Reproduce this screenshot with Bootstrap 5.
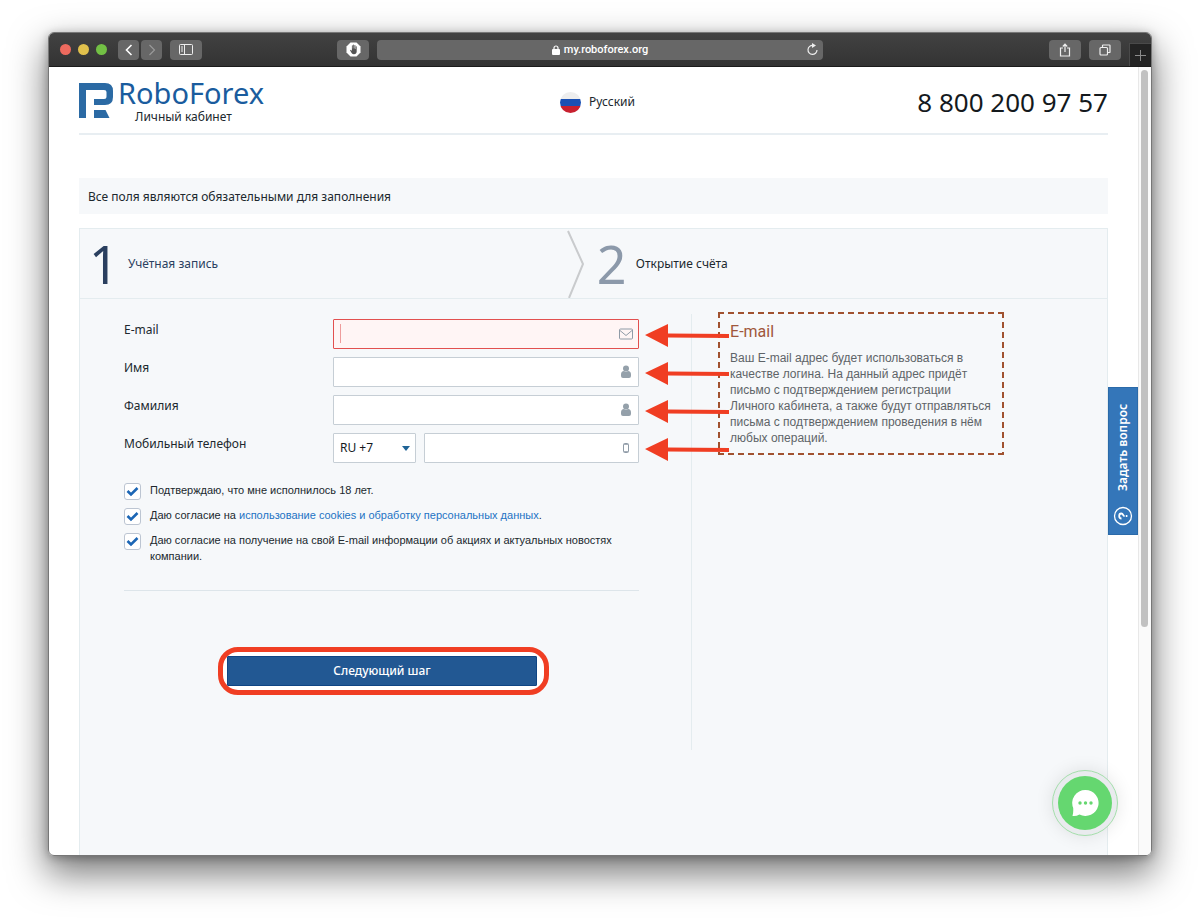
<!DOCTYPE html>
<html lang="ru">
<head>
<meta charset="utf-8">
<meta name="viewport" content="width=device-width, initial-scale=1">
<title>RoboForex — Личный кабинет</title>
<link href="https://cdn.jsdelivr.net/npm/bootstrap@5.3.0/dist/css/bootstrap.min.css" rel="stylesheet">
<style>
  :root { --line: #e4ecef; --panel: #f6f8fa; --accent: #f03e23; --brand: #225893; }
  body { font-family: "Noto Sans", sans-serif; font-size: 12px; line-height: 16px; color: #20282e; background: #fff; padding: 32px 48px 64px; }
  svg { display: block; }

  .browser { border: 1px solid #777; border-radius: 6px; overflow: hidden; background: #fff; }
  .browser-shadow { border-radius: 6px; box-shadow: 0 16px 36px 2px rgba(0,0,0,.52), 0 2px 10px rgba(0,0,0,.28); }

  .titlebar { height: 34px; background: linear-gradient(#424242, #333); border-bottom: 1px solid #1b1b1b; }
  .bar-side { flex: 1 1 0; }
  .lights { gap: 7px; padding: 0 11px; }
  .pair { gap: 2px; }
  .dot { width: 11px; height: 11px; border-radius: 50%; }
  .dot-close { background: #ed6a5e; }
  .dot-min { background: #e0c04c; }
  .dot-max { background: #72c044; }
  .tool { height: 20px; border: 0; border-radius: 4px; background: #676767; color: #fff; padding: 0; display: flex; align-items: center; justify-content: center; }
  .tool-w { width: 32px; }
  .tool-s { width: 21px; }
  .address { position: relative; flex: 0 0 446px; height: 20px; border-radius: 4px; background: #676767; color: #fff; font: 500 11px/20px Roboto, sans-serif; }
  .newtab { width: 22px; height: 23px; background: #232323; border: 1px solid #4a4a4a; border-width: 1px 0 0 1px; padding: 0; }

  .track { width: 13px; background: #fafafa; border-left: 1px solid #e8e8e8; padding: 3px 2px 0 2px; }
  .thumb { width: 7px; height: 71%; border-radius: 4px; background: #c1c1c1; }

  .page-body { padding: 0 30px; }
  .site-head { height: 68px; border-bottom: 2px solid #e8eef2; }
  .head-side { flex: 1 0 0; }
  .logo-name { font-size: 29px; line-height: 36px; color: #1a5c9e; }
  .logo-sub { line-height: 16px; padding-left: 17px; margin-top: -2px; }
  .hotline { font-size: 26px; line-height: 32px; color: #14191d; }
  .notice { background: var(--panel); height: 36px; padding: 2px 9px 0; margin-top: 43px; }

  .wizard { margin-top: 14px; background: var(--panel); border: 1px solid var(--line); border-bottom: 0; }
  .steps { height: 70px; border-bottom: 1px solid var(--line); }
  .step-one { flex: 0 0 47.4%; padding-left: 9px; color: #2a3f5f; }
  .step-two { padding-left: 12px; }
  .step-num { font-size: 52px; line-height: 60px; width: 39px; }
  .step-num-2 { color: #8c99aa; }

  .form-side { flex: 0 0 59.5%; padding: 20px 52px 0 44px; }
  .help-side { margin-top: 15px; height: 436px; border-left: 1px solid var(--line); padding-left: 26px; }
  .field { display: grid; grid-template-columns: 209px 1fr; position: relative; margin-bottom: 8px; }
  .field label { line-height: 22px; }
  .entry { position: relative; }
  .form-control, .form-select { height: 30px; border: 1px solid #c6ced5; border-radius: 1px; font-size: 12px; padding: 0 6px; box-shadow: none; background-color: #fff; }
  .form-control.wrong { border-color: #e2504f; background: #fff5f5; }
  .form-select { width: 83px; color: #14191d; background-size: 8px 5px; background-position: right 5px center;
    background-image: url("data:image/svg+xml,%3Csvg xmlns='http://www.w3.org/2000/svg' viewBox='0 0 8 5'%3E%3Cpath d='M0 0h8L4 5z' fill='%231f6396'/%3E%3C/svg%3E"); }
  .entry-icon { position: absolute; right: 6px; top: 8px; width: 14px; height: 14px; }
  .caret { position: absolute; left: 7px; top: 5px; width: 1px; height: 19px; background: #ee9c9c; }
  .arrow { position: absolute; left: calc(100% + 6px); top: 5px; z-index: 3; }

  .consents { padding-top: 11px; }
  .agree { margin-bottom: 7px; display: flex; }
  .agree label { font: 11px/16px "Liberation Sans", sans-serif; padding-left: 9px; }
  .agree a { color: #2373c4; text-decoration: none; }
  .form-check-input { width: 17px; height: 17px; margin: 1px 0 0; flex: none; border: 1px solid #bcc5d2; border-radius: 3px; background-color: #fff; }
  .form-check-input:checked { border-color: #bcc5d2; background-color: #fff; background-size: 15px 15px;
    background-image: url("data:image/svg+xml,%3Csvg xmlns='http://www.w3.org/2000/svg' viewBox='0 0 15 15'%3E%3Cpath d='M2.500 7l3.500 3.500L12.500 4' fill='none' stroke='%231c66b5' stroke-width='2.600'/%3E%3C/svg%3E"); }
  .rule { border-top: 1px solid #dde5ea; margin-top: 26px; }
  .ring-row { padding: 56px 0 0 4px; }
  .ring { width: 331px; max-width: 100%; height: 48px; margin: 0 auto; border: 5px solid var(--accent); border-radius: 20px; background: #fff; padding: 4px 7px 4px 4px; }
  .ring .btn { background: var(--brand); border: 1px solid #0f4584; border-radius: 1px; color: #fff; font-size: 12px; font-weight: 500; line-height: 16px; padding: 0; }

  .tip { width: 286px; height: 143px; margin-top: -2px; padding: 10px 12px 0; background: repeating-linear-gradient(90deg, #a0512f 0 6px, transparent 6px 10px) 0 0/100% 2px no-repeat, repeating-linear-gradient(90deg, #a0512f 0 6px, transparent 6px 10px) 0 100%/100% 2px no-repeat, repeating-linear-gradient(#a0512f 0 6px, transparent 6px 10px) 0 0/2px 100% no-repeat, repeating-linear-gradient(#a0512f 0 6px, transparent 6px 10px) 100% 0/2px 100% no-repeat; }
  .tip h2 { font: 16px/20px Roboto, sans-serif; color: #a0573c; margin-bottom: 8px; }
  .tip p { font: 12px/16px "Liberation Sans", sans-serif; color: #5e6468; margin: 0; }

  .ask { position: absolute; right: 13px; top: 320px; width: 30px; height: 148px; background: #3476b9; border: 1px solid #2b6aa9; color: #fff; writing-mode: vertical-rl; transform: rotate(180deg); font-weight: 600; line-height: 18px; padding: 8px 0; display: flex; align-items: center; gap: 15px; }
  .chat { position: absolute; right: 33px; bottom: 19px; width: 66px; height: 66px; border: 1px solid #a5dfac; border-radius: 50%; background: #e9ebee; box-shadow: 0 0 18px rgba(0,0,0,.1); padding: 5px; }
  .chat span { display: grid; place-items: center; width: 54px; height: 54px; border-radius: 50%; background: #65d770; }
</style>
</head>
<body class="min-vh-100 d-flex flex-column">
<div class="browser-shadow flex-grow-1 d-flex flex-column">
<div class="browser flex-grow-1 d-flex flex-column">

  <div class="titlebar d-flex align-items-center">
    <div class="bar-side d-flex align-items-center">
      <div class="lights d-flex"><span class="dot dot-close"></span><span class="dot dot-min"></span><span class="dot dot-max"></span></div>
      <div class="pair d-flex">
        <button class="tool tool-s" aria-label="Назад"><svg width="10" height="12" viewBox="0 0 10 12" fill="none" stroke="#fff" stroke-width="1.600"><path d="M7.500 1L2.500 6l5 5"/></svg></button>
        <button class="tool tool-s" aria-label="Вперёд"><svg width="10" height="12" viewBox="0 0 10 12" fill="none" stroke="#999" stroke-width="1.200"><path d="M2.500 1l5 5-5 5"/></svg></button>
      </div>
      <button class="tool tool-w ms-2" aria-label="Боковая панель"><svg width="14" height="11" viewBox="0 0 14 11" fill="none" stroke="#eee"><rect x=".5" y=".5" width="13" height="10" rx="1"/><path d="M5.500 1v9M2 3h2M2 5h2M2 7h2"/></svg></button>
      <button class="tool tool-w ms-auto me-2" aria-label="Блокировка"><svg width="15" height="15" viewBox="0 0 15 15"><path d="M4.500.5h6l4 4v6l-4 4h-6l-4-4v-6z" fill="#fff"/><path d="M4 8.300l.9-.5 1 1.200V3.600q.5-.6.9 0v3h.4V2.800q.5-.6.9 0v3.800h.4V3.200q.5-.6.9 0v3.900h.4V4.600q.5-.5.9 0v4.900q-.2 2.700-2.700 2.700-1.600 0-2.400-1.200z" fill="#555"/></svg></button>
    </div>
    <div class="address d-flex justify-content-center align-items-center">
      <svg class="me-1" width="8" height="10" viewBox="0 0 8 10"><rect y="4" width="8" height="6" rx="1" fill="#fff"/><path d="M2 4.500V3a2 2 0 0 1 4 0v1.500" fill="none" stroke="#fff" stroke-width="1.200"/></svg>
      <span>my.roboforex.org</span>
      <svg class="position-absolute end-0 me-1" width="13" height="13" viewBox="0 0 13 13"><path d="M7 2.400A4.500 4.500 0 1 0 11 7" fill="none" stroke="#eee" stroke-width="1.200"/><path d="M6 0l4 2.500L6 5z" fill="#eee"/></svg>
    </div>
    <div class="bar-side align-self-stretch d-flex justify-content-end align-items-center">
      <button class="tool tool-w me-2" aria-label="Поделиться"><svg width="12" height="14" viewBox="0 0 12 14" fill="none" stroke="#eee" stroke-width="1.200"><path d="M4 5H1.500v8h9V5H8M6 9V1.500M3.800 3.500L6 1.200l2.200 2.300"/></svg></button>
      <button class="tool tool-w me-2" aria-label="Вкладки"><svg width="12" height="12" viewBox="0 0 12 12" fill="none" stroke="#eee" stroke-width="1.200"><rect x="1" y="3.500" width="7.500" height="7.500" rx="1"/><path d="M3.500 3.500V1.600q0-.6.6-.6h6.300q.6 0 .6.600v6.300q0 .6-.6.600H8.500"/></svg></button>
      <button class="newtab align-self-end" aria-label="Новая вкладка"><svg class="mx-auto" width="11" height="11" viewBox="0 0 11 11" stroke="#8c8c8c"><path d="M5.500 0v11M0 5.500h11"/></svg></button>
    </div>
  </div>

  <div class="flex-grow-1 d-flex position-relative">
    <div class="page-body flex-grow-1 d-flex flex-column">
      <header class="site-head d-flex justify-content-between">
        <div class="head-side d-flex">
          <svg class="flex-shrink-0 mt-3" width="35" height="35" viewBox="0 0 35 35" fill="#2b6aa4"><path d="M0 0h26q8 0 8 8v6q0 8-8 8H15v-6h10q2.500 0 2.500-2.500V9q0-2-2.500-2H7v28H0z"/><path d="M15 27h11.500l4 8H15z"/></svg>
          <div class="pt-2 ps-1">
            <div class="logo-name">RoboForex</div>
            <div class="logo-sub">Личный кабинет</div>
          </div>
        </div>
        <a href="#" class="d-flex align-items-center text-reset text-decoration-none pt-1 ps-2">
          <svg class="me-2" width="21" height="21" viewBox="0 0 21 21"><clipPath id="flag"><circle cx="10.500" cy="10.500" r="10.500"/></clipPath><g clip-path="url(#flag)"><path fill="#eee" d="M0 0h21v7H0z"/><path fill="#1a50b4" d="M0 7h21v7H0z"/><path fill="#c8202f" d="M0 14h21v7H0z"/></g></svg>
          Русский
        </a>
        <div class="head-side hotline text-end align-self-center pt-1">8 800 200 97 57</div>
      </header>

      <div class="notice d-flex align-items-center">Все поля являются обязательными для заполнения</div>

      <main class="wizard flex-grow-1">
        <div class="steps d-flex">
          <div class="step-one d-flex align-items-center"><span class="step-num">1</span><span>Учётная запись</span></div>
          <svg class="flex-shrink-0" width="18" height="69" viewBox="0 0 18 69" fill="none" stroke="#c9cbcd" stroke-width="2"><path d="M1 2l15 33L2 69"/></svg>
          <div class="step-two d-flex align-items-center"><span class="step-num step-num-2">2</span><span>Открытие счёта</span></div>
        </div>

        <div class="d-flex">
          <form class="form-side">
            <div class="field">
              <label for="email">E-mail</label>
              <div class="entry">
                <input id="email" type="email" class="form-control wrong"><span class="caret"></span>
                <svg class="entry-icon" viewBox="0 0 14 14" fill="none" stroke="#8f9ba7"><rect x=".5" y="2" width="13" height="10" rx="1"/><path d="M1 3.500l6 5 6-5"/></svg>
                <svg class="arrow" width="84" height="24" viewBox="0 0 84 24" fill="#f03e23"><path d="M0 11L23 0v9.500l61 .5v4l-61-.5V23z"/></svg>
              </div>
            </div>
            <div class="field">
              <label for="name">Имя</label>
              <div class="entry">
                <input id="name" type="text" class="form-control">
                <svg class="entry-icon" viewBox="0 0 14 14" fill="#94a0aa"><circle cx="7" cy="3.500" r="3"/><path d="M2 9.500Q2 6 5 6q2 1.500 4 0 3 0 3 3.500V11q0 2-2 2H4q-2 0-2-2z"/></svg>
                <svg class="arrow" width="84" height="24" viewBox="0 0 84 24" fill="#f03e23"><path d="M0 11L23 0v9.500l61 .5v4l-61-.5V23z"/></svg>
              </div>
            </div>
            <div class="field">
              <label for="surname">Фамилия</label>
              <div class="entry">
                <input id="surname" type="text" class="form-control">
                <svg class="entry-icon" viewBox="0 0 14 14" fill="#94a0aa"><circle cx="7" cy="3.500" r="3"/><path d="M2 9.500Q2 6 5 6q2 1.500 4 0 3 0 3 3.500V11q0 2-2 2H4q-2 0-2-2z"/></svg>
                <svg class="arrow" width="84" height="24" viewBox="0 0 84 24" fill="#f03e23"><path d="M0 11L23 0v9.500l61 .5v4l-61-.5V23z"/></svg>
              </div>
            </div>
            <div class="field">
              <label for="phone">Мобильный телефон</label>
              <div class="entry d-flex">
                <select class="form-select flex-shrink-0 me-2" aria-label="Код страны"><option>RU +7</option></select>
                <input id="phone" type="tel" class="form-control">
                <svg class="entry-icon" viewBox="0 0 14 14" fill="none" stroke="#8f9ba7"><rect x="4.500" y="2.500" width="5" height="9" rx="1"/><path d="M5 3.500h4M5 10.500h4" stroke-width=".8"/></svg>
                <svg class="arrow" width="84" height="24" viewBox="0 0 84 24" fill="#f03e23"><path d="M0 11L23 0v9.500l61 .5v4l-61-.5V23z"/></svg>
              </div>
            </div>

            <div class="consents">
              <div class="agree"><input class="form-check-input" type="checkbox" id="age" checked><label for="age">Подтверждаю, что мне исполнилось 18 лет.</label></div>
              <div class="agree"><input class="form-check-input" type="checkbox" id="cookies" checked><label for="cookies">Даю согласие на <a href="#">использование cookies и обработку персональных данных</a>.</label></div>
              <div class="agree"><input class="form-check-input" type="checkbox" id="news" checked><label for="news">Даю согласие на получение на свой E-mail информации об акциях и актуальных новостях компании.</label></div>
            </div>
            <div class="rule"></div>
            <div class="ring-row"><div class="ring"><button type="button" class="btn w-100 h-100">Следующий шаг</button></div></div>
          </form>

          <aside class="help-side flex-grow-1">
            <div class="tip"><h2>E-mail</h2><p>Ваш E-mail адрес будет использоваться в качестве логина. На данный адрес придёт письмо с подтверждением регистрации Личного кабинета, а также будут отправляться письма с подтверждением проведения в нём любых операций.</p></div>
          </aside>
        </div>
      </main>
    </div>

    <div class="track"><div class="thumb"></div></div>

    <button type="button" class="ask">
      <svg width="20" height="20" viewBox="0 0 20 20" fill="none" stroke="#fff"><circle cx="10" cy="10" r="8.500" stroke-width="1.300"/><g transform="rotate(90 10 10)"><path d="M7.500 8.500Q7.500 6.200 10 6.200t2.500 2q0 1.300-1.300 1.900Q10 10.600 10 11.600" stroke-width="1.800"/><path d="M10 12.800v1.600" stroke-width="2"/></g></svg>
      <span>Задать вопрос</span>
    </button>
    <button type="button" class="chat" aria-label="Чат"><span><svg width="28" height="28" viewBox="0 0 28 28"><path d="M14.500 1a13 13 0 1 1-6 24.500Q5 27.500 1.500 27q1-3 .7-8A13 13 0 0 1 14.500 1z" fill="#fff"/><g fill="#65d770"><circle cx="9" cy="14" r="1.700"/><circle cx="14.500" cy="14" r="1.700"/><circle cx="20" cy="14" r="1.700"/></g></svg></span></button>
  </div>
</div>
</div>
<script src="https://cdn.jsdelivr.net/npm/bootstrap@5.3.0/dist/js/bootstrap.bundle.min.js"></script>
</body>
</html>
